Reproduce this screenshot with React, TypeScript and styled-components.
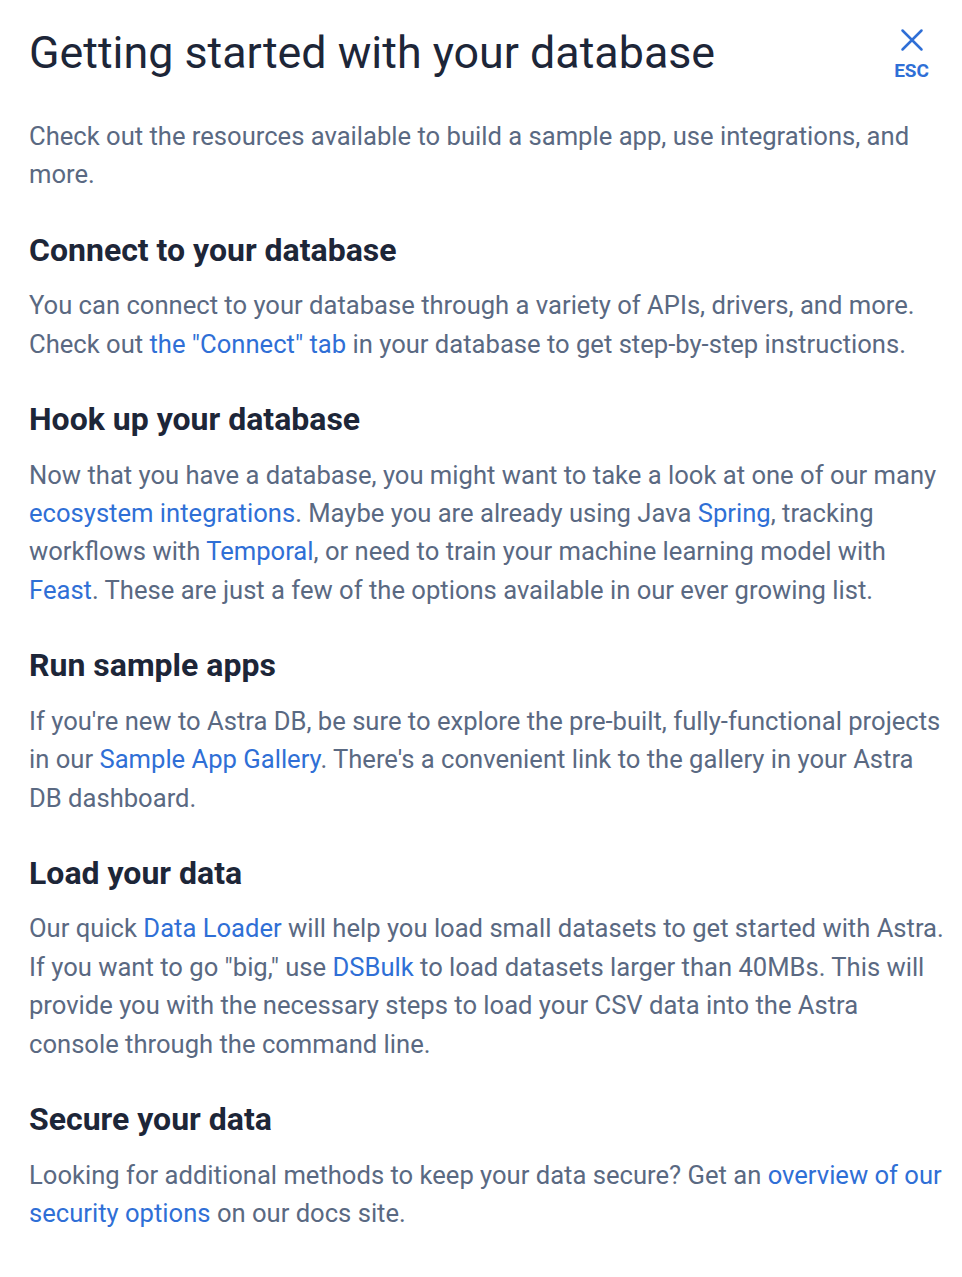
import React from "react";
import styled, { createGlobalStyle } from "styled-components";

const Global = createGlobalStyle`
  html, body { margin: 0; padding: 0; background: #ffffff; }
  body { font-family: Roboto, "Noto Sans", Arial, sans-serif; -webkit-font-smoothing: antialiased; }
`;

const Panel = styled.div`
  padding: 26px 16px 40px 29px;
  box-sizing: border-box;
  width: 962px;
`;

const Header = styled.header`
  display: flex;
  justify-content: space-between;
  align-items: flex-start;
`;

const Title = styled.h1`
  margin: 0;
  font-size: 44.8px;
  line-height: 54px;
  font-weight: 400;
  color: #1d2638;
`;

const Close = styled.button`
  display: flex;
  flex-direction: column;
  align-items: center;
  gap: 8px;
  background: none;
  border: 0;
  padding: 0;
  margin: 2px 17px 0 0;
  cursor: pointer;
  color: #2f6fd6;
  font-family: Roboto, Arial, sans-serif;
  font-weight: 700;
  font-size: 19px;
  line-height: 22px;
`;

const Intro = styled.p`
  margin: 35px 0 0;
  font-size: 25.6px;
  line-height: 38.4px;
  color: #5a6982;
`;

const Section = styled.section`
  margin-top: 37px;
`;

const Heading = styled.h2`
  margin: 0 0 17.5px;
  font-size: 32px;
  line-height: 38px;
  font-weight: 700;
  color: #1d2638;
`;

const Body = styled.p`
  margin: 0;
  font-size: 25.6px;
  line-height: 38.4px;
  color: #5a6982;
`;

const Link = styled.a`
  color: #2f6fd6;
  text-decoration: none;
`;

export default function App() {
  return (
    <>
      <Global />
      <Panel>
        <Header>
          <Title>Getting started with your database</Title>
          <Close aria-label="Close">
            <svg width="24" height="24" viewBox="0 0 24 24" fill="none">
              <path d="M2.5 2.5 L21.5 21.5 M21.5 2.5 L2.5 21.5" stroke="currentColor" strokeWidth="2.5" strokeLinecap="round" />
            </svg>
            ESC
          </Close>
        </Header>
        <Intro>
          Check out the resources available to build a sample app, use integrations, and more.
        </Intro>

        <Section>
          <Heading>Connect to your database</Heading>
          <Body>
            You can connect to your database through a variety of APIs, drivers, and more. Check out{" "}
            <Link href="#">the "Connect" tab</Link> in your database to get step-by-step instructions.
          </Body>
        </Section>

        <Section>
          <Heading>Hook up your database</Heading>
          <Body>
            Now that you have a database, you might want to take a look at one of our many{" "}
            <Link href="#">ecosystem integrations</Link>. Maybe you are already using Java{" "}
            <Link href="#">Spring</Link>, tracking workflows with <Link href="#">Temporal</Link>, or need to
            train your machine learning model with <Link href="#">Feast</Link>. These are just a few of the
            options available in our ever growing list.
          </Body>
        </Section>

        <Section>
          <Heading>Run sample apps</Heading>
          <Body>
            If you're new to Astra DB, be sure to explore the pre-built, fully-functional projects in our{" "}
            <Link href="#">Sample App Gallery</Link>. There's a convenient link to the gallery in your Astra DB
            dashboard.
          </Body>
        </Section>

        <Section>
          <Heading>Load your data</Heading>
          <Body>
            Our quick <Link href="#">Data Loader</Link> will help you load small datasets to get started with
            Astra. If you want to go "big," use <Link href="#">DSBulk</Link> to load datasets larger than
            40MBs. This will provide you with the necessary steps to load your CSV data into the Astra console
            through the command line.
          </Body>
        </Section>

        <Section>
          <Heading>Secure your data</Heading>
          <Body>
            Looking for additional methods to keep your data secure? Get an{" "}
            <Link href="#">overview of our security options</Link> on our docs site.
          </Body>
        </Section>
      </Panel>
    </>
  );
}
